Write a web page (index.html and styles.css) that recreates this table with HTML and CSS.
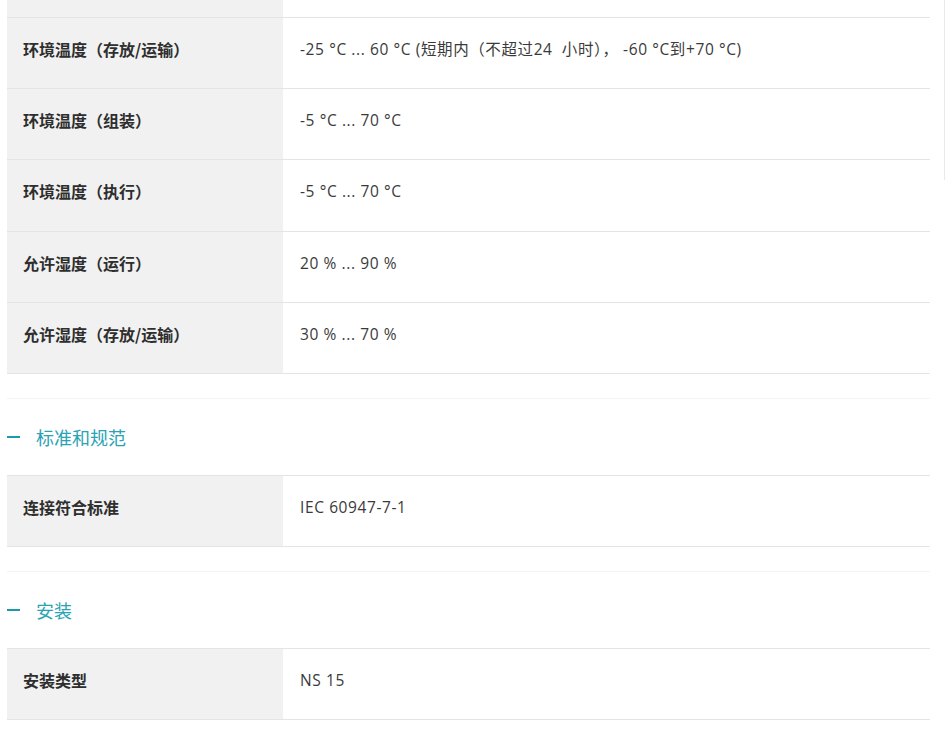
FILE: index.html
```html
<!DOCTYPE html>
<html lang="zh-CN">
<head>
<meta charset="utf-8">
<link rel="stylesheet" href="styles.css">
</head>
<body>
<div class="page">
  <div class="table">
    <div class="row row-partial"><div class="label"></div><div class="value"></div></div>
    <div class="row"><div class="label">环境温度（存放/运输）</div><div class="value">-25 °C ... 60 °C (短期内（不超过24&nbsp; 小时）， -60 °C到+70 °C)</div></div>
    <div class="row"><div class="label">环境温度（组装）</div><div class="value">-5 °C ... 70 °C</div></div>
    <div class="row"><div class="label">环境温度（执行）</div><div class="value">-5 °C ... 70 °C</div></div>
    <div class="row"><div class="label">允许湿度（运行）</div><div class="value">20 % ... 90 %</div></div>
    <div class="row"><div class="label">允许湿度（存放/运输）</div><div class="value">30 % ... 70 %</div></div>
  </div>

  <div class="section">
    <div class="section-head"><span class="dash"></span><span class="title">标准和规范</span></div>
    <div class="table">
      <div class="row"><div class="label">连接符合标准</div><div class="value">IEC 60947-7-1</div></div>
    </div>
  </div>

  <div class="section">
    <div class="section-head"><span class="dash"></span><span class="title">安装</span></div>
    <div class="table">
      <div class="row"><div class="label">安装类型</div><div class="value">NS 15</div></div>
    </div>
  </div>
</div>
<div class="scroll-edge"></div>
</body>
</html>
```

FILE: styles.css
```css
html, body {
  margin: 0;
  padding: 0;
  background: #fff;
  overflow: hidden;
}
body {
  font-family: "Open Sans", "Noto Sans CJK SC", sans-serif;
  color: #333;
}
.page {
  width: 923px;
  padding-left: 7px;
}
.table {
  display: flex;
  flex-direction: column;
}
.section .table {
  border-top: 1px solid #e4e4e4;
}
.row {
  display: grid;
  grid-template-columns: 276px 1fr;
  height: 70.2px;
  border-bottom: 1px solid #e4e4e4;
}
.row-partial {
  height: 17px;
}
.label {
  background: #f1f1f1;
  padding-left: 16px;
  padding-bottom: 8px;
  display: flex;
  align-items: center;
  font-family: "Noto Sans CJK SC", sans-serif;
  font-weight: 700;
  font-size: 16px;
  line-height: 20px;
  color: #2e2e2e;
}
.row-partial .label,
.row-partial .value {
  padding-bottom: 0;
}
.value {
  padding-left: 17px;
  padding-bottom: 8px;
  display: flex;
  align-items: center;
  font-family: "Open Sans", "Noto Sans CJK SC", sans-serif;
  font-size: 15.5px;
  letter-spacing: 0.6px;
  line-height: 20px;
  color: #3a3a3a;
}
.section {
  margin-top: 24px;
  border-top: 1px solid #f4f4f4;
}
.section-head {
  height: 76px;
  display: flex;
  align-items: center;
}
.dash {
  width: 13px;
  height: 2px;
  background: #1b9ba7;
  margin-right: 16px;
}
.title {
  font-family: "Noto Sans CJK SC", sans-serif;
  font-size: 18px;
  color: #2aa3b4;
}
.scroll-edge {
  position: absolute;
  top: 0;
  right: 0;
  width: 2px;
  height: 180px;
  border-left: 1px solid #e8e8ee;
}
```
